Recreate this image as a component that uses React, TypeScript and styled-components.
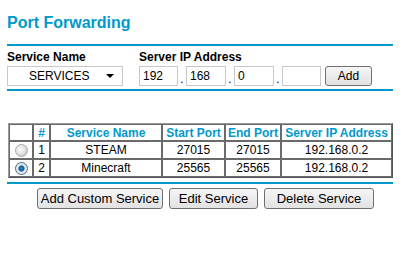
import * as React from 'react';
import styled, { createGlobalStyle } from 'styled-components';

const BLUE = '#0099cc';

const GlobalStyle = createGlobalStyle`
  body {
    margin: 0;
    background: #fff;
    font-family: 'Liberation Sans', Arial, sans-serif;
    color: #000;
  }
`;

const Page = styled.div`
  width: 386px;
  padding: 13px 0 0 7px;
`;

const Title = styled.h1`
  margin: 0;
  font-size: 16px;
  line-height: 19px;
  font-weight: bold;
  color: ${BLUE};
`;

type ruleProps = { $top: number };
const Rule = styled.div<ruleProps>`
  height: 2px;
  background: ${BLUE};
  margin-top: ${(p) => p.$top}px;
`;

const FormGrid = styled.div`
  display: grid;
  grid-template-columns: 116px auto;
  column-gap: 16px;
  row-gap: 2px;
  margin-top: 4px;
`;

const Label = styled.span`
  font-size: 12px;
  line-height: 14px;
  font-weight: bold;
`;

const SelectWrap = styled.div`
  position: relative;
  width: 116px;
  height: 20px;
`;

const Select = styled.select`
  appearance: none;
  width: 100%;
  height: 100%;
  border: 1px solid #c8c8c8;
  background: #fff;
  font-family: 'Liberation Sans', Arial, sans-serif;
  font-size: 12px;
  padding: 0 0 0 21px;
  color: #000;
  outline: none;
`;

const Arrow = styled.span`
  position: absolute;
  right: 9px;
  top: 8px;
  width: 0;
  height: 0;
  border-left: 4px solid transparent;
  border-right: 4px solid transparent;
  border-top: 4px solid #000;
  pointer-events: none;
`;

const IpRow = styled.div`
  display: flex;
  align-items: flex-end;
  height: 20px;
`;

type octetProps = { $w: number };
const Octet = styled.input<octetProps>`
  box-sizing: border-box;
  width: ${(p) => p.$w}px;
  height: 20px;
  border: 1px solid #c8c8c8;
  padding: 0 3px;
  font-family: 'Liberation Sans', Arial, sans-serif;
  font-size: 12px;
  color: #000;
  outline: none;
`;

const Dot = styled.span`
  width: 8px;
  text-align: center;
  font-size: 12px;
  line-height: 14px;
`;

type btnProps = { $w: number };
const Button = styled.button<btnProps>`
  box-sizing: border-box;
  width: ${(p) => p.$w}px;
  height: 21px;
  padding: 0;
  border: 1px solid #707070;
  border-radius: 3px;
  background: linear-gradient(#f6f6f6, #e2e2e2);
  font-family: 'Liberation Sans', Arial, sans-serif;
  font-size: 13px;
  color: #000;
`;

const AddButton = styled(Button)`
  height: 20px;
  margin-left: 4px;
  font-size: 12px;
`;

const Table = styled.table`
  margin-top: 32px;
  margin-left: 1px;
  width: 385px;
  table-layout: fixed;
  border-collapse: separate;
  border-spacing: 0;
  border: 1px solid #9a9a9a;
  border-right-color: #555;
  border-bottom-color: #555;
`;

const Th = styled.th`
  height: 15px;
  padding: 0;
  border: 1px solid #6a6a6a;
  font-size: 12px;
  font-weight: bold;
  color: ${BLUE};
  text-align: center;
`;

const Td = styled.td`
  height: 16px;
  padding: 0;
  border: 1px solid #6a6a6a;
  font-size: 12px;
  text-align: center;
`;

type radioProps = { $on: boolean };
const Radio = styled.span<radioProps>`
  display: inline-block;
  vertical-align: middle;
  box-sizing: border-box;
  width: 13px;
  height: 13px;
  border-radius: 50%;
  border: 1px solid ${(p) => (p.$on ? '#3d6a8a' : '#a9a9a9')};
  background: ${(p) =>
    p.$on
      ? 'radial-gradient(circle at 50% 50%, #2a8fd0 0, #0b5d9a 2.5px, #dcdcdc 3.5px, #f4f4f4 6px)'
      : 'radial-gradient(circle at 40% 40%, #fafafa 0, #e2e2e2 5px, #cfcfcf 6px)'};
`;

const ButtonBar = styled.div`
  display: flex;
  gap: 6px;
  margin: 4px 0 0 30px;
`;

const services = [
  { id: 1, name: 'STEAM', start: '27015', end: '27015', ip: '192.168.0.2', on: false },
  { id: 2, name: 'Minecraft', start: '25565', end: '25565', ip: '192.168.0.2', on: true },
];

export default function App() {
  return (
    <Page>
      <GlobalStyle />
      <Title>Port Forwarding</Title>
      <Rule $top={12} />
      <FormGrid>
        <Label>Service Name</Label>
        <Label>Server IP Address</Label>
        <SelectWrap>
          <Select defaultValue="SERVICES">
            <option>SERVICES</option>
          </Select>
          <Arrow />
        </SelectWrap>
        <IpRow>
          <Octet $w={39} defaultValue="192" />
          <Dot>.</Dot>
          <Octet $w={40} defaultValue="168" />
          <Dot>.</Dot>
          <Octet $w={40} defaultValue="0" />
          <Dot>.</Dot>
          <Octet $w={39} defaultValue="" />
          <AddButton $w={47}>Add</AddButton>
        </IpRow>
      </FormGrid>
      <Rule $top={3} />
      <Table>
        <colgroup>
          <col style={{ width: 24 }} />
          <col style={{ width: 17 }} />
          <col style={{ width: 112 }} />
          <col style={{ width: 63 }} />
          <col style={{ width: 56 }} />
          <col />
        </colgroup>
        <thead>
          <tr>
            <Th />
            <Th>#</Th>
            <Th>Service Name</Th>
            <Th>Start Port</Th>
            <Th>End Port</Th>
            <Th>Server IP Address</Th>
          </tr>
        </thead>
        <tbody>
          {services.map((s) => (
            <tr key={s.id}>
              <Td>
                <Radio $on={s.on} />
              </Td>
              <Td>{s.id}</Td>
              <Td>{s.name}</Td>
              <Td>{s.start}</Td>
              <Td>{s.end}</Td>
              <Td>{s.ip}</Td>
            </tr>
          ))}
        </tbody>
      </Table>
      <Rule $top={4} />
      <ButtonBar>
        <Button $w={126}>Add Custom Service</Button>
        <Button $w={89}>Edit Service</Button>
        <Button $w={110}>Delete Service</Button>
      </ButtonBar>
    </Page>
  );
}
